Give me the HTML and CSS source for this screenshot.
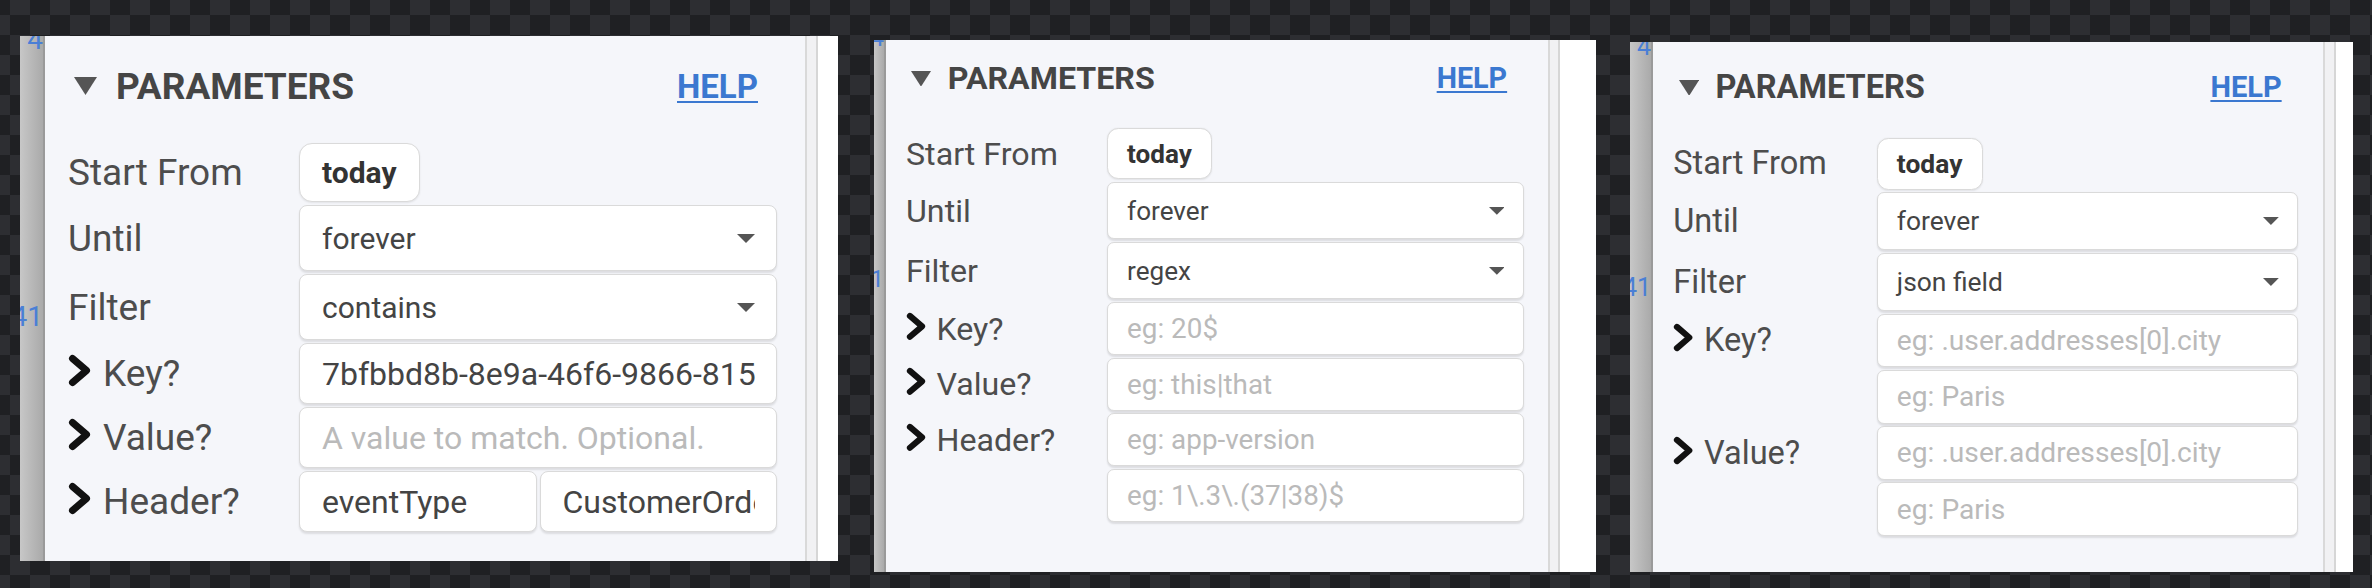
FILE: index.html
```html
<!DOCTYPE html>
<html lang="en">
<head>
<meta charset="utf-8">
<title>Parameters</title>
<link rel="stylesheet" href="styles.css">
</head>
<body>
<main class="board">

  <section class="shot shot-1">
    <div class="gutter"><span class="ln ln-top">4</span><span class="ln ln-mark">41</span></div>
    <div class="params">
      <div class="form">
        <div class="head">
          <svg class="caret" viewBox="0 0 23 18"><polygon points="0,0 23,0 11.5,18"/></svg>
          <span class="title">PARAMETERS</span>
          <a class="help">HELP</a>
        </div>
        <div class="fields">
          <div class="row row-pill"><div class="lab">Start From</div><div class="ctl"><span class="pill">today</span></div></div>
          <div class="row row-select"><div class="lab">Until</div><div class="ctl"><div class="select"><span>forever</span><svg class="drop" viewBox="0 0 18 9"><polygon points="0,0 18,0 9,9"/></svg></div></div></div>
          <div class="row row-select"><div class="lab">Filter</div><div class="ctl"><div class="select"><span>contains</span><svg class="drop" viewBox="0 0 18 9"><polygon points="0,0 18,0 9,9"/></svg></div></div></div>
          <div class="row"><div class="lab"><svg class="chev" viewBox="0 0 24 34"><polyline points="4.5,4.5 18.5,16.5 4.5,28.5"/></svg>Key?</div><div class="ctl"><input class="field" type="text" value="7bfbbd8b-8e9a-46f6-9866-815c3d2e1f0a"></div></div>
          <div class="row"><div class="lab"><svg class="chev" viewBox="0 0 24 34"><polyline points="4.5,4.5 18.5,16.5 4.5,28.5"/></svg>Value?</div><div class="ctl"><input class="field" type="text" placeholder="A value to match. Optional."></div></div>
          <div class="row"><div class="lab"><svg class="chev" viewBox="0 0 24 34"><polyline points="4.5,4.5 18.5,16.5 4.5,28.5"/></svg>Header?</div><div class="ctl ctl-pair"><input class="field" type="text" value="eventType"><input class="field" type="text" value="CustomerOrderCreated"></div></div>
        </div>
      </div>
    </div>
    <div class="rail"><div class="rail-pane"></div></div>
  </section>

  <section class="shot shot-2">
    <div class="gutter"><span class="ln ln-top">4</span><span class="ln ln-mark">41</span></div>
    <div class="params">
      <div class="form">
        <div class="head">
          <svg class="caret" viewBox="0 0 23 18"><polygon points="0,0 23,0 11.5,18"/></svg>
          <span class="title">PARAMETERS</span>
          <a class="help">HELP</a>
        </div>
        <div class="fields">
          <div class="row row-pill"><div class="lab">Start From</div><div class="ctl"><span class="pill">today</span></div></div>
          <div class="row row-select"><div class="lab">Until</div><div class="ctl"><div class="select"><span>forever</span><svg class="drop" viewBox="0 0 18 9"><polygon points="0,0 18,0 9,9"/></svg></div></div></div>
          <div class="row row-select"><div class="lab">Filter</div><div class="ctl"><div class="select"><span>regex</span><svg class="drop" viewBox="0 0 18 9"><polygon points="0,0 18,0 9,9"/></svg></div></div></div>
          <div class="row"><div class="lab"><svg class="chev" viewBox="0 0 24 34"><polyline points="4.5,4.5 18.5,16.5 4.5,28.5"/></svg>Key?</div><div class="ctl"><input class="field" type="text" placeholder="eg: 20$"></div></div>
          <div class="row"><div class="lab"><svg class="chev" viewBox="0 0 24 34"><polyline points="4.5,4.5 18.5,16.5 4.5,28.5"/></svg>Value?</div><div class="ctl"><input class="field" type="text" placeholder="eg: this|that"></div></div>
          <div class="row"><div class="lab"><svg class="chev" viewBox="0 0 24 34"><polyline points="4.5,4.5 18.5,16.5 4.5,28.5"/></svg>Header?</div><div class="ctl"><input class="field" type="text" placeholder="eg: app-version"><input class="field" type="text" placeholder="eg: 1\.3\.(37|38)$"></div></div>
        </div>
      </div>
    </div>
    <div class="rail"><div class="rail-pane"></div></div>
  </section>

  <section class="shot shot-3">
    <div class="gutter"><span class="ln ln-top">4</span><span class="ln ln-mark">41</span></div>
    <div class="params">
      <div class="form">
        <div class="head">
          <svg class="caret" viewBox="0 0 23 18"><polygon points="0,0 23,0 11.5,18"/></svg>
          <span class="title">PARAMETERS</span>
          <a class="help">HELP</a>
        </div>
        <div class="fields">
          <div class="row row-pill"><div class="lab">Start From</div><div class="ctl"><span class="pill">today</span></div></div>
          <div class="row row-select"><div class="lab">Until</div><div class="ctl"><div class="select"><span>forever</span><svg class="drop" viewBox="0 0 18 9"><polygon points="0,0 18,0 9,9"/></svg></div></div></div>
          <div class="row row-select"><div class="lab">Filter</div><div class="ctl"><div class="select"><span>json field</span><svg class="drop" viewBox="0 0 18 9"><polygon points="0,0 18,0 9,9"/></svg></div></div></div>
          <div class="row"><div class="lab"><svg class="chev" viewBox="0 0 24 34"><polyline points="4.5,4.5 18.5,16.5 4.5,28.5"/></svg>Key?</div><div class="ctl"><input class="field" type="text" placeholder="eg: .user.addresses[0].city"><input class="field" type="text" placeholder="eg: Paris"></div></div>
          <div class="row"><div class="lab"><svg class="chev" viewBox="0 0 24 34"><polyline points="4.5,4.5 18.5,16.5 4.5,28.5"/></svg>Value?</div><div class="ctl"><input class="field" type="text" placeholder="eg: .user.addresses[0].city"><input class="field" type="text" placeholder="eg: Paris"></div></div>
        </div>
      </div>
    </div>
    <div class="rail"><div class="rail-pane"></div></div>
  </section>

</main>
</body>
</html>
```

FILE: styles.css
```css
html, body {
  margin: 0;
  padding: 0;
}

body {
  width: 2372px;
  height: 588px;
  overflow: hidden;
  background: repeating-conic-gradient(#2d2e32 0 25%, #1f2023 0 50%) 10px 15px / 40px 40px;
  font-family: Roboto, "Liberation Sans", sans-serif;
}

.board {
  display: flex;
  align-items: flex-start;
  padding-left: 20px;
}

.shot {
  display: flex;
  overflow: hidden;
  flex: none;
}

.shot-1 {
  margin-top: 36px;
  height: 525px;
  --gw: 25px; --pw: 760px; --rw: 33px; --rp: 9px;
  --k: 1; --pt: 10px;
  --ln: 28px; --ln-top: -10px; --ln-gap: 249px;
}

.shot-2 {
  margin-left: 36px;
  margin-top: 40px;
  height: 532px;
  --gw: 12px; --pw: 662px; --rw: 48px; --rp: 8px;
  --k: 0.87; --pt: 4.3px;
  --ln: 24px; --ln-top: -14px; --ln-gap: 217px;
}

.shot-3 {
  margin-left: 34px;
  margin-top: 42px;
  height: 530px;
  --gw: 23px; --pw: 670px; --rw: 30px; --rp: 9px;
  --k: 0.88; --pt: 11.7px;
  --ln: 25px; --ln-top: -8px; --ln-gap: 216px;
}

/* editor line-number gutter peeking out on the left */
.gutter {
  width: var(--gw);
  flex: none;
  box-sizing: border-box;
  border-right: 2px solid #9a9a9a;
  background: linear-gradient(90deg, #c7c7c7, #aaaaaa);
  display: flex;
  flex-direction: column;
  align-items: flex-end;
  overflow: hidden;
  color: #4a7fd6;
  font-size: var(--ln);
  line-height: var(--ln);
  white-space: nowrap;
}

.ln-top { margin-top: var(--ln-top); }
.ln-mark { margin-top: var(--ln-gap); }

/* main light panel */
.params {
  width: var(--pw);
  flex: none;
  background: #f5f6fa;
}

.form {
  zoom: var(--k);
  padding: var(--pt) 28px 0 23px;
}

.head {
  display: flex;
  align-items: center;
  height: 80px;
  margin-bottom: 17px;
  padding: 0 19px 0 6px;
}

.caret {
  width: 23px;
  height: 18px;
  fill: #555;
  flex: none;
  margin-right: 19px;
}

.title {
  font-size: 37px;
  line-height: 1;
  font-weight: 700;
  color: #454545;
}

.help {
  margin-left: auto;
  font-size: 33px;
  line-height: 1;
  font-weight: 700;
  color: #3b78d0;
  text-decoration: underline;
  text-decoration-thickness: 2px;
  text-underline-offset: 3px;
}

.fields {
  display: flex;
  flex-direction: column;
  gap: 3px;
}

.row {
  display: flex;
  align-items: flex-start;
}

.lab {
  width: 231px;
  flex: none;
  height: 61px;
  display: flex;
  align-items: center;
  font-size: 37px;
  line-height: 1;
  color: #4d4d4d;
  white-space: nowrap;
}

.row-pill .lab { height: 59px; }
.row-select .lab { height: 66px; }

.chev {
  width: 24px;
  height: 34px;
  flex: none;
  margin: 0 11px 5px 0;
  fill: none;
  stroke: #111;
  stroke-width: 7;
  stroke-linecap: round;
  stroke-linejoin: round;
}

.ctl {
  flex: 1;
  min-width: 0;
  display: flex;
  flex-direction: column;
  gap: 3px;
}

.ctl-pair {
  flex-direction: row;
}

.pill {
  align-self: flex-start;
  box-sizing: border-box;
  height: 59px;
  display: inline-flex;
  align-items: center;
  padding: 0 22px;
  background: #fff;
  border: 1px solid #dadada;
  border-radius: 13px;
  box-shadow: 0 1px 2px rgba(0, 0, 0, 0.08);
  font-size: 30px;
  font-weight: 700;
  color: #333;
}

.select {
  box-sizing: border-box;
  height: 66px;
  display: flex;
  align-items: center;
  justify-content: space-between;
  padding: 0 21px 0 22px;
  background: #fff;
  border: 1px solid #dadada;
  border-radius: 8px;
  box-shadow: 0 2px 2px rgba(0, 0, 0, 0.1);
  font-size: 30px;
  color: #444;
}

.drop {
  width: 18px;
  height: 9px;
  fill: #555;
  flex: none;
}

.field {
  box-sizing: border-box;
  width: 100%;
  min-width: 0;
  flex: 1;
  height: 61px;
  margin: 0;
  padding: 0 21px 0 22px;
  background: #fff;
  border: 1px solid #dadada;
  border-radius: 8px;
  box-shadow: 0 2px 2px rgba(0, 0, 0, 0.1);
  outline: none;
  font-family: Roboto, "Liberation Sans", sans-serif;
  font-size: 32px;
  color: #444;
}

.ctl .field { flex: none; }
.ctl-pair .field { flex: 1; width: auto; }

.field::placeholder {
  color: #bababa;
  opacity: 1;
}

/* right-hand scroll rails */
.rail {
  width: var(--rw);
  flex: none;
  box-sizing: border-box;
  display: flex;
  border-left: 2px solid #d9d9d9;
  background: #f1f1f3;
  padding-left: var(--rp);
}

.rail-pane {
  flex: 1;
  border-left: 2px solid #d6d6d6;
  background: #fff;
}
```
